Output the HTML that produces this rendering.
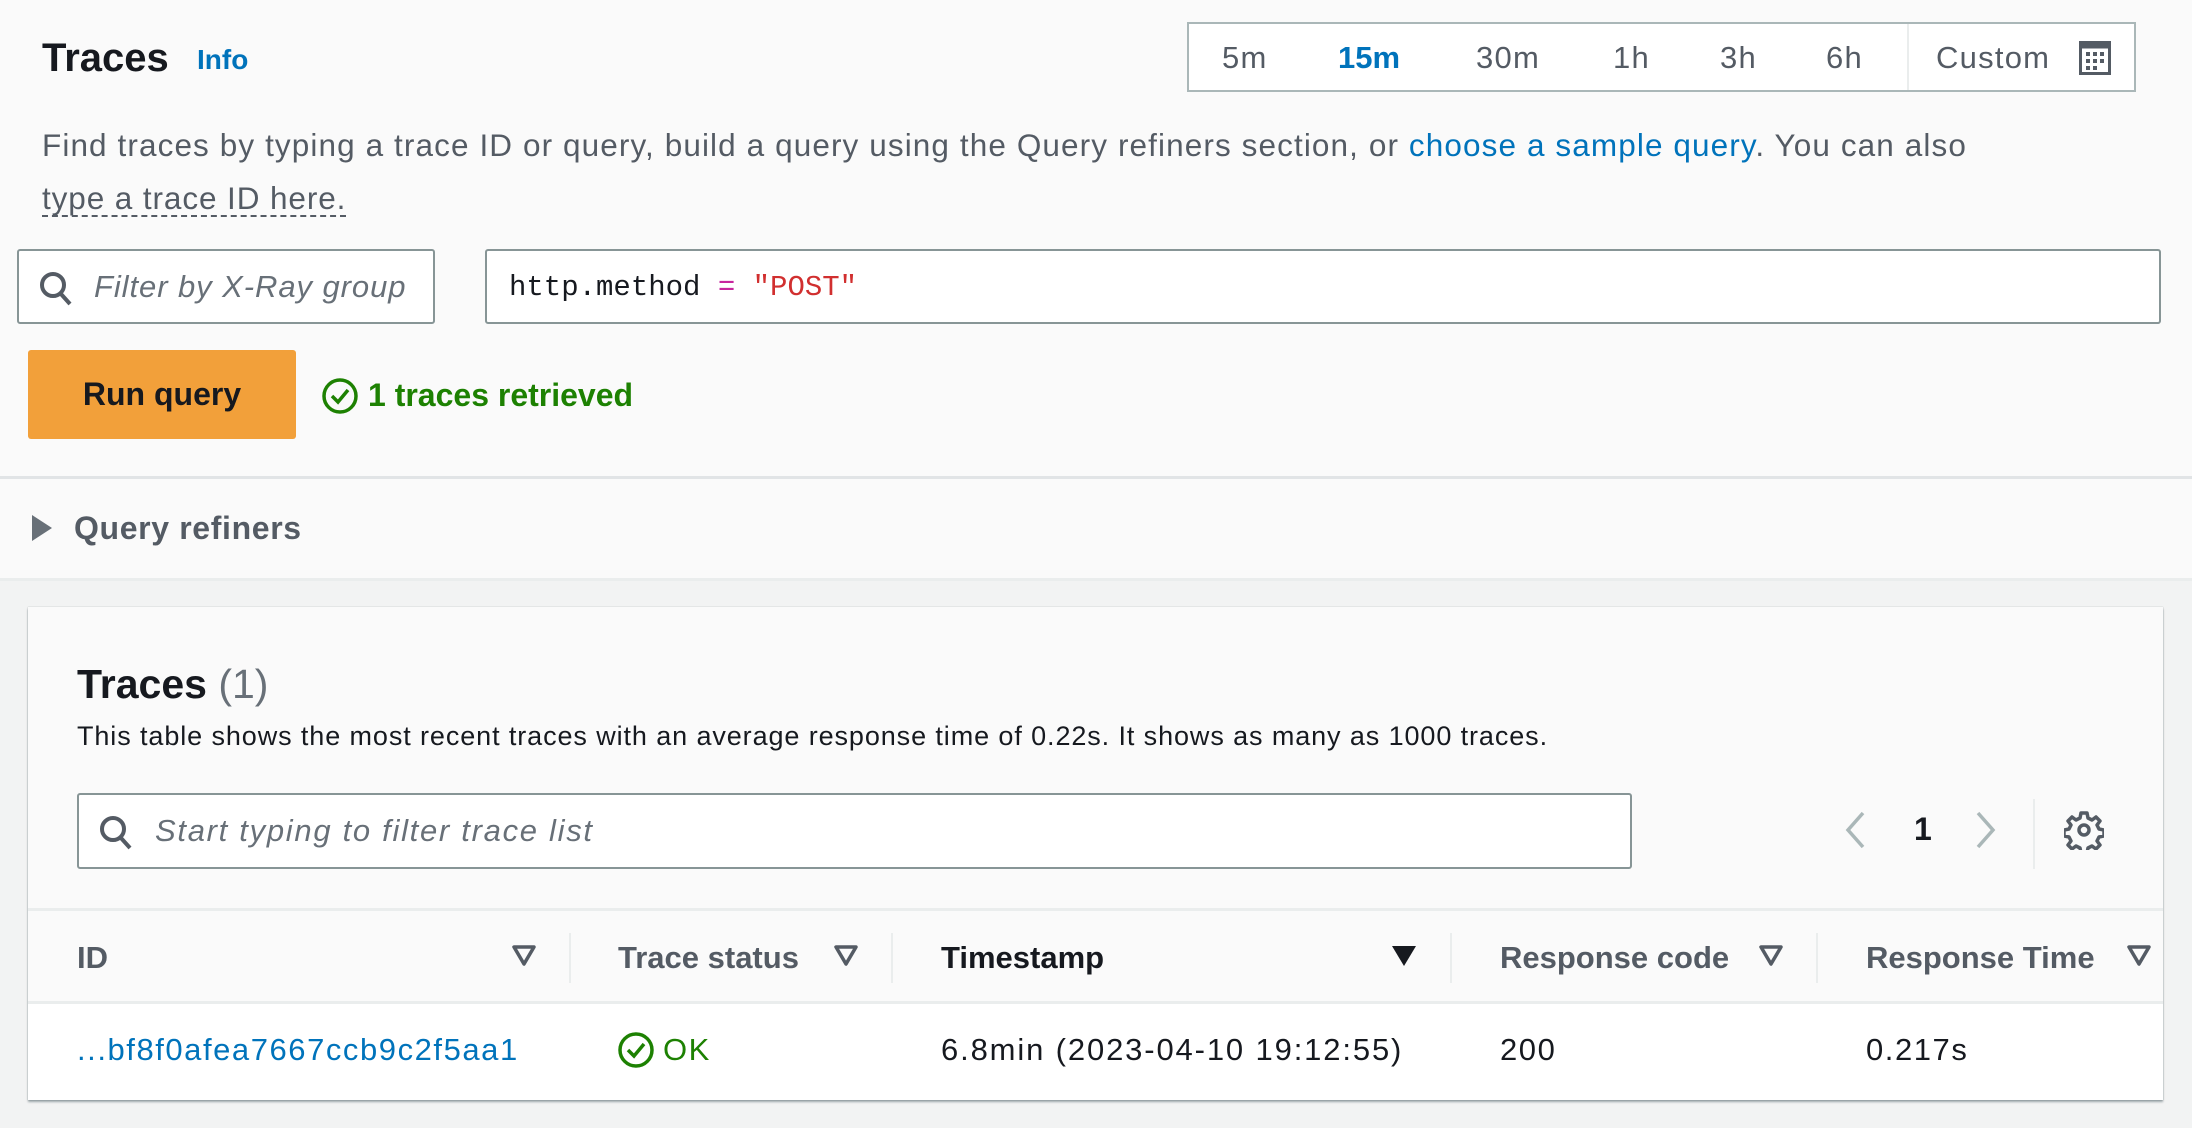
<!DOCTYPE html>
<html><head><meta charset="utf-8"><style>
*{box-sizing:border-box;margin:0;padding:0}
body{width:2192px;height:1128px;background:#f2f3f3;font-family:"Liberation Sans",Arial,sans-serif;color:#16191f;position:relative;overflow:hidden}
.top{position:absolute;left:0;top:0;width:2192px;height:579px;background:#fafafa}
.abs{position:absolute;white-space:nowrap}
.hr{position:absolute;left:0;width:2192px;height:3px;background:#e1e4e6}
.inp{position:absolute;background:#fff;border:2px solid #879596;border-radius:3px}
.tr{position:absolute;top:22px;left:1187px;width:949px;height:70px;border:2px solid #aab7b8;background:#fff}
.tr span{position:absolute;top:16px;font-size:31px;color:#545b64;letter-spacing:0.04em}
.card{position:absolute;left:28px;top:607px;width:2135px;height:493px;background:#fafafa;box-shadow:0 2px 2px rgba(0,28,36,.35),0 0 1px rgba(0,28,36,.3)}
.th{position:absolute;top:32px;font-size:31px;font-weight:bold;color:#545b64}
.vd{position:absolute;top:63px;width:2px;height:50px;background:#eaeded}
.td{position:absolute;top:124px;font-size:31px;letter-spacing:0.05em}
</style></head><body>
<div class="top"></div>
<div class="abs" style="left:42px;top:36px;font-size:40px;font-weight:bold">Traces</div>
<div class="abs" style="left:197px;top:44px;font-size:28px;font-weight:bold;color:#0073bb">Info</div>
<div class="tr">
<span style="left:33px">5m</span>
<span style="left:149px;color:#0073bb;font-weight:bold;letter-spacing:0">15m</span>
<span style="left:287px">30m</span>
<span style="left:424px">1h</span>
<span style="left:531px">3h</span>
<span style="left:637px">6h</span>
<div style="position:absolute;left:718px;top:0;width:2px;height:66px;background:#eaeded"></div>
<span style="left:747px">Custom</span>
<svg style="position:absolute;left:890px;top:17px" width="32" height="34" viewBox="0 0 32 34"><rect x="1.5" y="1.5" width="29" height="31" fill="none" stroke="#545b64" stroke-width="3"/><rect x="1.5" y="1.5" width="29" height="6" fill="#545b64"/><g fill="#545b64"><rect x="7" y="11" width="4" height="4"/><rect x="14" y="11" width="4" height="4"/><rect x="21" y="11" width="4" height="4"/><rect x="7" y="18" width="4" height="4"/><rect x="14" y="18" width="4" height="4"/><rect x="21" y="18" width="4" height="4"/><rect x="7" y="25" width="4" height="4"/><rect x="14" y="25" width="4" height="4"/></g></svg>
</div>
<div class="abs" style="left:42px;top:127px;font-size:31.5px;color:#545b64;letter-spacing:1.1px">Find traces by typing a trace ID or query, build a query using the Query refiners section, or <span style="color:#0073bb">choose a sample query</span>. You can also</div>
<div class="abs" style="left:42px;top:181px;font-size:31.5px;color:#545b64;border-bottom:2px dashed #545b64;line-height:34px;letter-spacing:0.9px">type a trace ID here.</div>
<div class="inp" style="left:17px;top:249px;width:418px;height:75px">
<svg style="position:absolute;left:20px;top:20px" width="34" height="36" viewBox="0 0 34 36"><circle cx="14" cy="14" r="11" fill="none" stroke="#545b64" stroke-width="4"/><path d="M22 23l9 10" stroke="#545b64" stroke-width="4"/></svg>
<span class="abs" style="left:75px;top:18px;font-size:31px;font-style:italic;color:#687078;letter-spacing:0.03em">Filter by X-Ray group</span></div>
<div class="inp" style="left:485px;top:249px;width:1676px;height:75px">
<span class="abs" style="left:22px;top:20px;font-size:29px;font-family:'Liberation Mono',monospace;color:#16191f">http.method <span style="color:#c7259e">=</span> <span style="color:#d12f2f">"POST"</span></span></div>
<div class="abs" style="left:28px;top:350px;width:268px;height:89px;background:#f2a03a;border-radius:3px;font-size:32px;font-weight:bold;text-align:center;line-height:89px">Run query</div>
<svg class="abs" style="left:321px;top:377px" width="38" height="38" viewBox="0 0 38 38"><circle cx="19" cy="19" r="16" fill="none" stroke="#1d8102" stroke-width="3.5"/><path d="M11 19l6 6 10-12" fill="none" stroke="#1d8102" stroke-width="3.5"/></svg>
<div class="abs" style="left:368px;top:377px;font-size:32px;color:#1d8102;font-weight:bold">1 traces retrieved</div>
<div class="hr" style="top:476px"></div>
<svg class="abs" style="left:30px;top:513px" width="24" height="30"><path d="M2 2L22 15L2 28Z" fill="#687078"/></svg>
<div class="abs" style="left:74px;top:510px;font-size:32px;font-weight:bold;color:#545b64;letter-spacing:0.02em">Query refiners</div>
<div class="hr" style="top:578px;height:3px;background:#eaeded"></div>

<div class="card">
<div class="abs" style="left:49px;top:54px;font-size:41px;font-weight:bold">Traces <span style="font-weight:normal;color:#687078">(1)</span></div>
<div class="abs" style="left:49px;top:114px;font-size:27px;color:#16191f;letter-spacing:0.9px">This table shows the most recent traces with an average response time of 0.22s. It shows as many as 1000 traces.</div>
<div class="inp" style="left:49px;top:186px;width:1555px;height:76px">
<svg style="position:absolute;left:20px;top:20px" width="34" height="36" viewBox="0 0 34 36"><circle cx="14" cy="14" r="11" fill="none" stroke="#545b64" stroke-width="4"/><path d="M22 23l9 10" stroke="#545b64" stroke-width="4"/></svg>
<span class="abs" style="left:76px;top:18px;font-size:31px;font-style:italic;color:#687078;letter-spacing:0.055em">Start typing to filter trace list</span></div>
<svg class="abs" style="left:1815px;top:203px" width="24" height="40"><path d="M20 3L5 20L20 37" fill="none" stroke="#aab7b8" stroke-width="3.5"/></svg>
<div class="abs" style="left:1886px;top:204px;font-size:32px;font-weight:bold">1</div>
<svg class="abs" style="left:1946px;top:203px" width="24" height="40"><path d="M4 3L19 20L4 37" fill="none" stroke="#aab7b8" stroke-width="3.5"/></svg>
<div class="abs" style="left:2005px;top:192px;width:2px;height:70px;background:#eaeded"></div>
<svg class="abs" style="left:2036px;top:203px" width="40" height="40" viewBox="0 0 40 40"><path d="M17 3h6l1 5 4 2 4-3 4 4-3 4 2 4 5 1v6l-5 1-2 4 3 4-4 4-4-3-4 2-1 5h-6l-1-5-4-2-4 3-4-4 3-4-2-4-5-1v-6l5-1 2-4-3-4 4-4 4 3 4-2z" fill="none" stroke="#545b64" stroke-width="3.5" stroke-linejoin="round"/><circle cx="20" cy="20" r="5" fill="none" stroke="#545b64" stroke-width="3.5"/></svg>
<div style="position:absolute;left:0;top:301px;width:2135px;height:192px">
<div style="position:absolute;left:0;top:0;width:100%;height:3px;background:#eaeded"></div>
<div class="th" style="left:49px">ID</div>
<div class="th" style="left:590px">Trace status</div>
<div class="th" style="left:913px;color:#16191f">Timestamp</div>
<div class="th" style="left:1472px">Response code</div>
<div class="th" style="left:1838px">Response Time</div>
<svg class="abs" style="left:483px;top:36px" width="26" height="24"><path d="M3 3h20L13 20z" fill="none" stroke="#545b64" stroke-width="3.5" stroke-linejoin="round"/></svg>
<svg class="abs" style="left:805px;top:36px" width="26" height="24"><path d="M3 3h20L13 20z" fill="none" stroke="#545b64" stroke-width="3.5" stroke-linejoin="round"/></svg>
<svg class="abs" style="left:1362px;top:36px" width="28" height="24"><path d="M2 2h24L14 22z" fill="#16191f"/></svg>
<svg class="abs" style="left:1730px;top:36px" width="26" height="24"><path d="M3 3h20L13 20z" fill="none" stroke="#545b64" stroke-width="3.5" stroke-linejoin="round"/></svg>
<svg class="abs" style="left:2098px;top:36px" width="26" height="24"><path d="M3 3h20L13 20z" fill="none" stroke="#545b64" stroke-width="3.5" stroke-linejoin="round"/></svg>
<div class="vd" style="left:541px;top:25px"></div>
<div class="vd" style="left:863px;top:25px"></div>
<div class="vd" style="left:1422px;top:25px"></div>
<div class="vd" style="left:1788px;top:25px"></div>
<div style="position:absolute;left:0;top:93px;width:100%;height:99px;background:#fff;border-top:3px solid #eaeded"></div>
<div class="td" style="left:49px;color:#0073bb">...bf8f0afea7667ccb9c2f5aa1</div>
<svg class="abs" style="left:589px;top:123px" width="38" height="38" viewBox="0 0 38 38"><circle cx="19" cy="19" r="16" fill="none" stroke="#1d8102" stroke-width="3.5"/><path d="M11 19l6 6 10-12" fill="none" stroke="#1d8102" stroke-width="3.5"/></svg>
<div class="td" style="left:635px;color:#1d8102">OK</div>
<div class="td" style="left:913px;letter-spacing:0.06em">6.8min (2023-04-10 19:12:55)</div>
<div class="td" style="left:1472px">200</div>
<div class="td" style="left:1838px">0.217s</div>
</div>
</div>
</body></html>
